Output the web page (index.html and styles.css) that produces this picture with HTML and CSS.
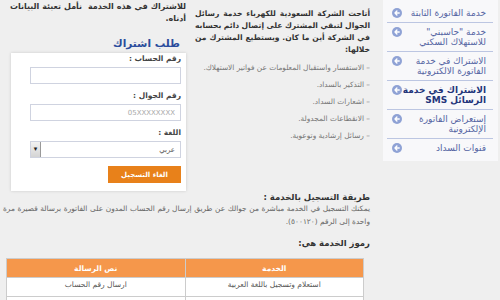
FILE: index.html
```html
<!DOCTYPE html>
<html lang="ar" dir="rtl">
<head>
    <meta charset="UTF-8">
    <title>خدمة الرسائل SMS</title>
    <link rel="stylesheet" href="styles.css">
</head>
<body>
    <div class="page">
        <aside class="sidebar">
            <a class="side-item" href="#">
                <span class="side-text">خدمة الفاتورة الثابتة</span>
                <svg class="side-icon" viewBox="0 0 10 10"><circle cx="5" cy="5" r="5"/><path d="M7.2 5H3 M4.9 3 L3 5 L4.9 7"/></svg>
            </a>
            <a class="side-item" href="#">
                <span class="side-text">خدمة "حاسبني"<br>للاستهلاك السكني</span>
                <svg class="side-icon" viewBox="0 0 10 10"><circle cx="5" cy="5" r="5"/><path d="M7.2 5H3 M4.9 3 L3 5 L4.9 7"/></svg>
            </a>
            <a class="side-item" href="#">
                <span class="side-text">الاشتراك في خدمة<br>الفاتورة الالكترونية</span>
                <svg class="side-icon" viewBox="0 0 10 10"><circle cx="5" cy="5" r="5"/><path d="M7.2 5H3 M4.9 3 L3 5 L4.9 7"/></svg>
            </a>
            <a class="side-item active" href="#">
                <span class="side-text">الاشتراك في خدمة<br>الرسائل SMS</span>
                <svg class="side-icon" viewBox="0 0 10 10"><circle cx="5" cy="5" r="5"/><path d="M7.2 5H3 M4.9 3 L3 5 L4.9 7"/></svg>
            </a>
            <a class="side-item" href="#">
                <span class="side-text">إستعراض الفاتورة<br>الإلكترونية</span>
                <svg class="side-icon" viewBox="0 0 10 10"><circle cx="5" cy="5" r="5"/><path d="M7.2 5H3 M4.9 3 L3 5 L4.9 7"/></svg>
            </a>
            <a class="side-item" href="#">
                <span class="side-text">قنوات السداد</span>
                <svg class="side-icon" viewBox="0 0 10 10"><circle cx="5" cy="5" r="5"/><path d="M7.2 5H3 M4.9 3 L3 5 L4.9 7"/></svg>
            </a>
        </aside>

        <main class="content">
            <div class="intro">
                <div class="intro-text">
                    <p class="lead">أتاحت الشركة السعودية للكهرباء خدمة رسائل الجوال لتبقي المشترك على إتصال دائم بحسابه في الشركة أين ما كان. ويستطيع المشترك من خلالها:</p>
                    <ul class="features">
                        <li>الاستفسار واستقبال المعلومات عن فواتير الاستهلاك.</li>
                        <li>التذكير بالسداد.</li>
                        <li>اشعارات السداد.</li>
                        <li>الانقطاعات المجدولة.</li>
                        <li>رسائل إرشادية وتوعوية.</li>
                    </ul>
                </div>

                <div class="intro-form">
                    <p class="lead">للاشتراك في هذه الخدمة &nbsp;نأمل تعبئة البيانات أدناه.</p>
                    <h2 class="form-title">طلب اشتراك</h2>
                    <form class="form-box">
                        <label class="field-label">رقم الحساب :</label>
                        <input class="field-input" type="text">
                        <label class="field-label">رقم الجوال :</label>
                        <input class="field-input" type="text" placeholder="05XXXXXXXX">
                        <label class="field-label">اللغة :</label>
                        <div class="select-box">
                            <span class="select-value">عربي</span>
                            <span class="select-btn">▾</span>
                        </div>
                        <button class="cancel-btn" type="button">الغاء التسجيل</button>
                    </form>
                </div>
            </div>

            <h3 class="section-title">طريقة التسجيل بالخدمة :</h3>
            <p class="body-text">يمكنك التسجيل في الخدمة مباشرة من جوالك عن طريق إرسال رقم الحساب المدون على الفاتورة برسالة قصيرة مرة واحدة إلى الرقم (٥٠٠١٢٠).</p>

            <h3 class="section-title codes-title">رموز الخدمة هي:</h3>
            <table class="codes">
                <thead>
                    <tr>
                        <th>الخدمة</th>
                        <th>نص الرسالة</th>
                    </tr>
                </thead>
                <tbody>
                    <tr>
                        <td>استعلام وتسجيل باللغة العربية</td>
                        <td>ارسال رقم الحساب</td>
                    </tr>
                    <tr class="spacer-row">
                        <td></td>
                        <td></td>
                    </tr>
                </tbody>
            </table>
        </main>
    </div>
</body>
</html>
```

FILE: styles.css
```css
* {
    margin: 0;
    padding: 0;
    box-sizing: border-box;
}

body {
    font-family: "DejaVu Sans", "Noto Sans", sans-serif;
    background: #efefef;
    direction: rtl;
    color: #333;
}

.page {
    display: flex;
    align-items: flex-start;
    gap: 13px;
    padding-right: 2px;
}

/* sidebar */

.sidebar {
    width: 115px;
    background: #f8f8fa;
    padding: 4px 5px 5px 4px;
}

.side-item {
    display: flex;
    align-items: flex-start;
    padding: 4px 7px 3px 5px;
    border-bottom: 1px solid #bcc6e2;
    color: #5565a3;
    text-decoration: none;
    font-size: 9px;
    line-height: 10.5px;
}

.side-item:last-child {
    border-bottom: none;
}

.side-item.active {
    color: #23357a;
    font-weight: bold;
}

.side-icon {
    width: 10px;
    height: 10px;
    margin-right: auto;
    flex-shrink: 0;
}

.side-icon circle {
    fill: #8fa2d5;
}

.side-icon path {
    fill: none;
    stroke: #fff;
    stroke-width: 1.4;
    stroke-linecap: round;
    stroke-linejoin: round;
}

/* main column */

.content {
    width: 367px;
}

.intro {
    display: flex;
    gap: 9px;
}

.intro-text {
    width: 175px;
    padding-top: 8px;
}

.lead {
    font-size: 8px;
    font-weight: bold;
    line-height: 12px;
    text-align: justify;
    color: #333;
}

.intro-text .lead {
    font-size: 7.6px;
    word-spacing: -0.8px;
}

.features {
    list-style: none;
    margin-top: 6px;
}

.features li {
    font-size: 7.4px;
    line-height: 12px;
    color: #777;
    margin-bottom: 5px;
    white-space: nowrap;
}

.features li::before {
    content: "– ";
}

.intro-form {
    width: 176px;
    padding-top: 1px;
}

.form-title {
    font-size: 10.5px;
    font-weight: bold;
    color: #2b4c9c;
    margin: 12px 6px 4px 0;
}

.form-box {
    display: flex;
    flex-direction: column;
    align-items: flex-start;
    width: 175px;
    background: #fff;
    box-shadow: 0 0 3px rgba(0, 0, 0, 0.15);
    padding: 0 5px 8px 19px;
}

.field-label {
    font-size: 7.5px;
    font-weight: bold;
    line-height: 12px;
    color: #444;
    margin: 6px 0 2px;
}

.field-label:first-child {
    margin-top: 0;
}

.field-input,
.select-box {
    width: 151px;
    height: 17px;
    border: 1px solid #cfd3e0;
    background: #fff;
    font-family: inherit;
    font-size: 7px;
    padding: 0 5px;
}

.field-input::placeholder {
    color: #aaa;
}

.select-box {
    display: flex;
    align-items: center;
    padding: 0 5px 0 0;
    color: #555;
}

.select-btn {
    margin-right: auto;
    width: 10px;
    height: 15px;
    background: linear-gradient(#f2f2f2, #d4d4d4);
    border-right: 1px solid #999;
    color: #222;
    font-size: 7px;
    line-height: 15px;
    text-align: center;
}

.cancel-btn {
    margin-top: 8px;
    width: 73px;
    height: 17px;
    border: none;
    background: #e8811a;
    color: #fff;
    font-family: inherit;
    font-size: 7px;
    font-weight: bold;
}

/* lower section */

.section-title {
    font-size: 8.5px;
    font-weight: bold;
    line-height: 12px;
}

.body-text {
    font-size: 7.4px;
    line-height: 12.5px;
    color: #666;
    text-align: justify;
}

.codes-title {
    margin-top: 9px;
}

.codes {
    width: 358px;
    margin: 9px 6px 0 0;
    border-collapse: collapse;
    background: #fff;
}

.codes th,
.codes td {
    width: 50%;
    border: 1px solid #ccc;
    text-align: center;
    font-size: 7.5px;
}

.codes th {
    background: #f5974b;
    color: #fff;
    font-weight: bold;
    height: 19px;
}

.codes td {
    height: 19px;
    vertical-align: top;
    padding-top: 2px;
    color: #555;
}
```
